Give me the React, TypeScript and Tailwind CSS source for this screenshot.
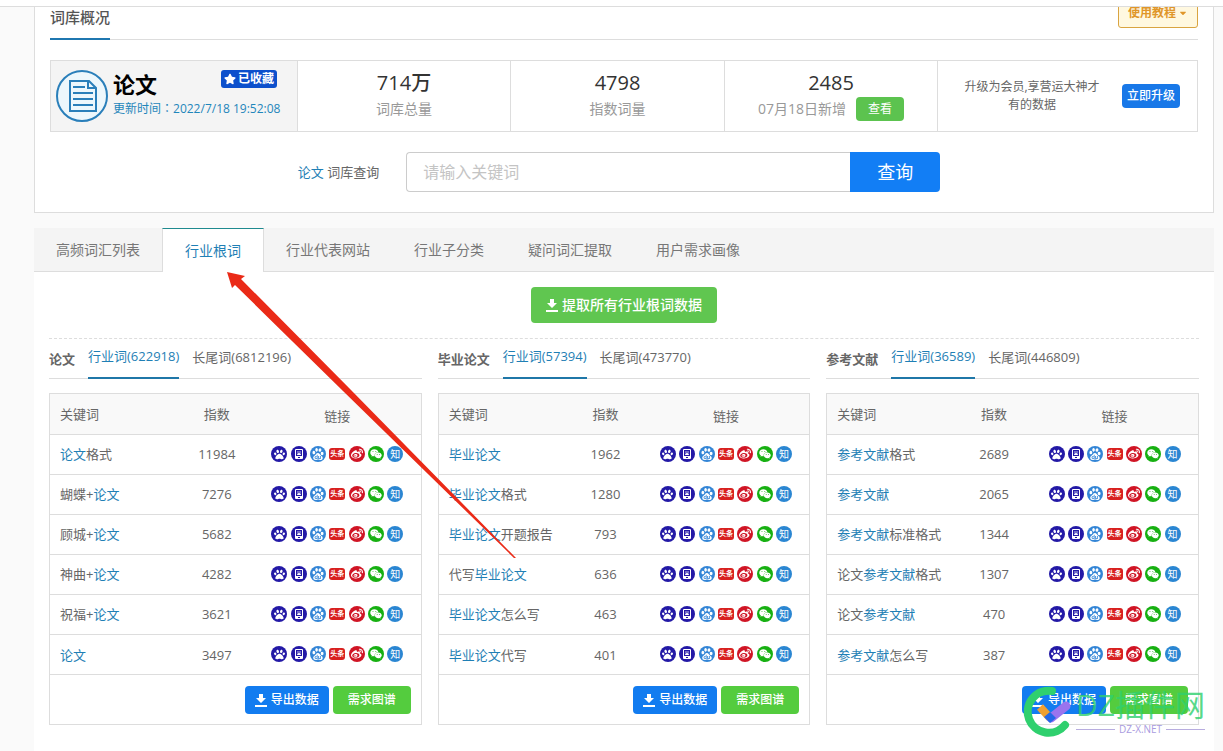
import { FaPaw, FaStar, FaWeibo, FaWeixin, FaCaretDown } from 'react-icons/fa';
import { SiBaidu } from 'react-icons/si';

const tabs = ['高频词汇列表', '行业根词', '行业代表网站', '行业子分类', '疑问词汇提取', '用户需求画像'];

const groups = [
  {
    root: '论文',
    industry: 622918,
    longTail: 6812196,
    rows: [
      { word: '论文格式', index: 11984 },
      { word: '蝴蝶+论文', index: 7276 },
      { word: '顾城+论文', index: 5682 },
      { word: '神曲+论文', index: 4282 },
      { word: '祝福+论文', index: 3621 },
      { word: '论文', index: 3497 },
    ],
  },
  {
    root: '毕业论文',
    industry: 57394,
    longTail: 473770,
    rows: [
      { word: '毕业论文', index: 1962 },
      { word: '毕业论文格式', index: 1280 },
      { word: '毕业论文开题报告', index: 793 },
      { word: '代写毕业论文', index: 636 },
      { word: '毕业论文怎么写', index: 463 },
      { word: '毕业论文代写', index: 401 },
    ],
  },
  {
    root: '参考文献',
    industry: 36589,
    longTail: 446809,
    rows: [
      { word: '参考文献格式', index: 2689 },
      { word: '参考文献', index: 2065 },
      { word: '参考文献标准格式', index: 1344 },
      { word: '论文参考文献格式', index: 1307 },
      { word: '论文参考文献', index: 470 },
      { word: '参考文献怎么写', index: 387 },
    ],
  },
];

function DownloadIcon() {
  return (
    <svg width="12" height="13" viewBox="0 0 12 13" fill="currentColor" aria-hidden="true">
      <path d="M4 0h4v4h3L6 9 1 4h3z" />
      <path d="M0 11h12v2H0z" />
    </svg>
  );
}

function DocIcon() {
  return (
    <svg width="52" height="52" viewBox="0 0 52 52" fill="none" stroke="#2a7fba" strokeWidth="2" className="shrink-0">
      <circle cx="26" cy="26" r="25" fill="#edf7fc" />
      <path d="M14 11h19l7 7v23H14z" />
      <path d="M32 11v7h8" />
      <path d="M17 17h12M17 23h20M17 29h20M17 35h20" />
    </svg>
  );
}

function Keyword({ word, root }: { word: string; root: string }) {
  const [before, after] = word.split(root);
  return (
    <>
      {before}
      <a href="#" className="text-[#1f7fb5]">{root}</a>
      {after}
    </>
  );
}

const round = 'w-4 h-4 rounded-full flex items-center justify-center text-white';

function EngineLinks() {
  return (
    <div className="w-[132px] mx-auto flex items-center justify-between">
      <a href="#" title="百度" className={`${round} bg-[#2319a6]`}><FaPaw size={11} /></a>
      <a href="#" title="百度移动" className={`${round} bg-[#2319a6]`}>
        <svg width="8" height="10" viewBox="0 0 8 10">
          <rect width="8" height="10" rx="1" fill="#fff" />
          <rect x="1" y="1" width="6" height="6" fill="#2319a6" />
          <path d="M2 6a2 2 0 0 1 4 0z" fill="#fff" />
          <circle cx="3" cy="3" r=".7" fill="#fff" />
          <circle cx="5" cy="3" r=".7" fill="#fff" />
          <rect x="3" y="8" width="2" height="1" fill="#2319a6" />
        </svg>
      </a>
      <a href="#" title="百度指数" className={`${round} bg-[#3385d6]`}><SiBaidu size={12} /></a>
      <a href="#" title="头条" className="w-4 h-3 rounded-[3px] bg-[#d8201f] text-white text-[7px] leading-3 font-bold text-center whitespace-nowrap">头条</a>
      <a href="#" title="微博" className={`${round} bg-[#d01525]`}><FaWeibo size={12} /></a>
      <a href="#" title="微信" className={`${round} bg-[#17b012]`}><FaWeixin size={12} /></a>
      <a href="#" title="知乎" className={`${round} bg-[#2a86d2] text-[10px] leading-4`}>知</a>
    </div>
  );
}

function RootGroup({ group }: { group: (typeof groups)[number] }) {
  return (
    <section>
      <div className="h-10 flex items-start border-b border-[#ddd]">
        <h3 className="font-bold leading-10 mr-[13px]">{group.root}</h3>
        <button className="h-10 pb-1 border-b-2 border-[#1f77a8] text-[#1f7fb5] leading-8 mr-[13px]">行业词({group.industry})</button>
        <button className="h-9 leading-9">长尾词({group.longTail})</button>
      </div>
      <div className="mt-3.5 border border-[#ddd]">
        <table className="w-full table-fixed border-collapse">
          <thead>
            <tr className="h-10 bg-[#f9f9f9]">
              <th className="w-[35%] pt-0.5 pl-2.5 font-normal text-left">关键词</th>
              <th className="w-[20%] pt-0.5 font-normal">指数</th>
              <th className="w-[45%] pt-1.5 font-normal">链接</th>
            </tr>
          </thead>
          <tbody>
            {group.rows.map(r => (
              <tr key={r.word} className="h-10 border-t border-[#ddd]">
                <td className="pt-0.5 pl-2.5 whitespace-nowrap"><Keyword word={r.word} root={group.root} /></td>
                <td className="pt-0.5 text-center">{r.index}</td>
                <td><EngineLinks /></td>
              </tr>
            ))}
          </tbody>
        </table>
        <div className="border-t border-[#ddd] pt-[11px] pb-2.5 pr-2.5 flex justify-end gap-1 text-white text-xs font-medium">
          <button className="h-7 px-2.5 rounded bg-[#127cf0] flex items-center gap-1">
            <DownloadIcon />
            导出数据
          </button>
          <button className="h-7 px-[15px] rounded bg-[#54cc3e]">需求图谱</button>
        </div>
      </div>
    </section>
  );
}

function Stat({ value, label, children }: { value: string; label: string; children?: React.ReactNode }) {
  return (
    <div className="border-l border-[#ddd] pt-2 text-center">
      <div className="text-xl leading-7 font-medium text-[#333]">{value}</div>
      <div className="h-6 flex items-center justify-center gap-2.5 text-sm text-[#999]">
        {label}
        {children}
      </div>
    </div>
  );
}

function Arrow() {
  return (
    <svg width="300" height="300" viewBox="0 0 300 300" className="absolute left-[220px] top-[265px] pointer-events-none">
      <path d="M7 7L25 11L21 14L131 125L296 293L294 293L123 126L15 20L12 23Z" fill="#ea2a17" />
    </svg>
  );
}

function Watermark() {
  return (
    <div className="absolute right-[18px] bottom-[13px] flex items-center gap-1 pointer-events-none">
      <svg width="50" height="54" viewBox="0 0 50 54" fill="none">
        <path d="M30 7A21 21 0 1 0 43 41" stroke="#2fd06e" strokeWidth="8" strokeLinecap="round" />
        <path d="M18 23l10 11" stroke="#f0a030" strokeWidth="8" />
        <path d="M29 34L44 22" stroke="#9a74ee" strokeWidth="9" strokeLinecap="round" />
        <path d="M22 33l6-5 6 6-6 5z" fill="#2468e8" />
      </svg>
      <div>
        <div className="text-[30px] leading-9 text-[#2fd06e] opacity-80">DZ插件网</div>
        <div className="flex items-center gap-1 text-[10px] leading-3 text-[#a99be0]">
          <span className="flex-1 h-px bg-[#b8addf]" />
          DZ-X.NET
          <span className="flex-1 h-px bg-[#b8addf]" />
        </div>
      </div>
    </div>
  );
}

export default function App() {
  return (
    <div className="relative min-h-screen flex flex-col bg-[#fafafa] text-[13px] text-[#666] font-['Open_Sans','Noto_Sans_CJK_SC',sans-serif]">
      <header className="h-[7px] bg-white border-b border-[#ddd] relative z-10" />

      <section className="ml-[34px] mr-[9px] px-[15px] pb-5 bg-white border border-t-0 border-[#ddd]">
        <div className="h-[33px] flex justify-between items-end border-b border-[#ddd]">
          <h2 className="h-[33px] -mb-px border-b-2 border-[#1f77b0] text-[15px] leading-5 font-medium text-[#555]">词库概况</h2>
          <button className="h-[30px] mb-[11px] px-[9px] flex items-center gap-0.5 rounded-[3px] border border-[#d9a441] bg-[#fff8e0] text-xs font-bold text-[#e0962a]">
            使用教程
            <FaCaretDown size={10} />
          </button>
        </div>

        <div className="mt-5 h-[72px] grid grid-cols-[246fr_213fr_214fr_213fr_260fr] border border-[#ddd]">
          <div className="bg-[#f4f4f4] px-[5px] flex items-center gap-[5px]">
            <DocIcon />
            <div className="w-[168px] pb-1">
              <div className="flex items-start justify-between">
                <h1 className="text-[22px] leading-7 font-bold text-black">论文</h1>
                <button className="h-[18px] mr-1 px-[3px] flex items-center gap-0.5 rounded-[3px] bg-[#0c50cc] text-white text-xs font-bold">
                  <FaStar size={12} />
                  已收藏
                </button>
              </div>
              <div className="text-xs leading-5 text-[#1f86bb] whitespace-nowrap">
                更新时间<span className="font-['Noto_Sans_CJK_TC',sans-serif]" lang="zh-TW">：</span>2022/7/18 19:52:08
              </div>
            </div>
          </div>
          <Stat value="714万" label="词库总量" />
          <Stat value="4798" label="指数词量" />
          <Stat value="2485" label="07月18日新增">
            <button className="h-6 px-3 rounded-sm bg-[#5cc34f] text-white text-xs">查看</button>
          </Stat>
          <div className="border-l border-[#ddd] pl-6 pr-[17px] flex items-center justify-between text-xs leading-[18px]">
            <p className="w-[140px] text-center">升级为会员,享营运大神才有的数据</p>
            <button className="h-6 px-[5px] rounded-sm bg-[#1878e8] text-white font-medium">立即升级</button>
          </div>
        </div>

        <form className="mt-5 pr-2.5 flex justify-center items-center" onSubmit={e => e.preventDefault()}>
          <label htmlFor="keyword" className="mr-[27px] pt-0.5"><span className="text-[#1f7fb5]">论文</span> 词库查询</label>
          <input
            id="keyword"
            placeholder="请输入关键词"
            className="w-[444px] h-10 px-4 border border-r-0 border-[#ccc] rounded-l-sm text-base placeholder:text-[#c4c4c4]"
          />
          <button className="w-[90px] h-10 rounded-r-sm bg-[#127ef5] text-white text-lg">查询</button>
        </form>
      </section>

      <section className="mt-[15px] ml-[34px] mr-[9px] flex-1 bg-white">
        <nav className="h-11 flex bg-[#f4f4f4] border-b border-[#ddd] text-sm">
          {tabs.map(t => (
            <button
              key={t}
              className={
                t === '行业根词'
                  ? 'h-11 w-[102px] border border-b-0 border-[#ddd] border-t-[#1f8a8f] bg-white text-[#1f7fb5]'
                  : 'px-[22px] text-[#777]'
              }
            >
              {t}
            </button>
          ))}
        </nav>
        <div className="px-[15px] pt-[15px] pb-6">
          <button className="h-9 mx-auto px-[15px] flex items-center gap-1 rounded-sm bg-[#60c650] text-white text-sm font-medium">
            <DownloadIcon />
            提取所有行业根词数据
          </button>
          <div className="mt-[15px] border-t border-dashed border-[#ddd] grid grid-cols-3 gap-4">
            {groups.map(g => <RootGroup key={g.root} group={g} />)}
          </div>
        </div>
      </section>

      <Arrow />
      <Watermark />
    </div>
  );
}
